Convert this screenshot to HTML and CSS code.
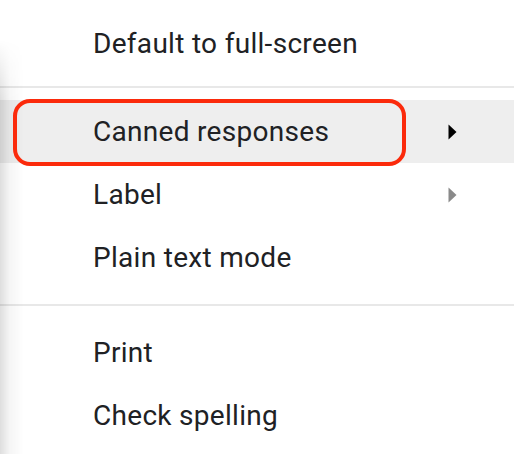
FILE: index.html
```html
<!DOCTYPE html>
<html>
<head>
<meta charset="utf-8">
<link rel="stylesheet" href="styles.css">
</head>
<body>
<div class="menu">
  <div class="item">Default to full-screen</div>
  <div class="sep sep-a"></div>
  <div class="item active">Canned responses
    <svg class="arrow" width="9" height="16" viewBox="0 0 9 16"><polygon points="0.5,0.5 8.5,8 0.5,15.5" fill="#000"/></svg>
  </div>
  <div class="item">Label
    <svg class="arrow" width="9" height="16" viewBox="0 0 9 16"><polygon points="0.5,0.5 8.5,8 0.5,15.5" fill="#8a8a8a"/></svg>
  </div>
  <div class="item">Plain text mode</div>
  <div class="sep sep-b"></div>
  <div class="item">Print</div>
  <div class="item">Check spelling</div>
  <div class="shadow"></div>
  <div class="ring"></div>
</div>
</body>
</html>
```
FILE: styles.css
```css
html, body {
  margin: 0;
  padding: 0;
  background: #fff;
}
.menu {
  position: relative;
  width: 514px;
  height: 454px;
  padding-top: 12px;
  box-sizing: border-box;
  font-family: Roboto, "Liberation Sans", sans-serif;
  font-size: 28px;
  letter-spacing: 0.3px;
  color: #202124;
  overflow: hidden;
}
.item {
  height: 63px;
  line-height: 63px;
  padding-left: 93px;
  display: flex;
  align-items: center;
  position: relative;
}
.item.active {
  background: #eeeeee;
}
.arrow {
  position: absolute;
  left: 448px;
  top: 24px;
}
.sep {
  height: 2px;
  background: #e8e8e8;
}
.sep-a {
  margin: 11px 0 12px;
}
.sep-b {
  margin: 15px 0 15px;
}
.shadow {
  position: absolute;
  left: 0;
  top: 40px;
  bottom: 0;
  width: 24px;
  background: linear-gradient(to right, rgba(0,0,0,0.13), rgba(0,0,0,0.04) 40%, rgba(0,0,0,0));
  -webkit-mask-image: linear-gradient(to bottom, transparent, #000 60px);
  mask-image: linear-gradient(to bottom, transparent, #000 60px);
  pointer-events: none;
}
.ring {
  position: absolute;
  left: 13px;
  top: 99px;
  width: 393px;
  height: 67px;
  box-sizing: border-box;
  border: 4px solid #fb2a0b;
  border-radius: 17px;
}
```
